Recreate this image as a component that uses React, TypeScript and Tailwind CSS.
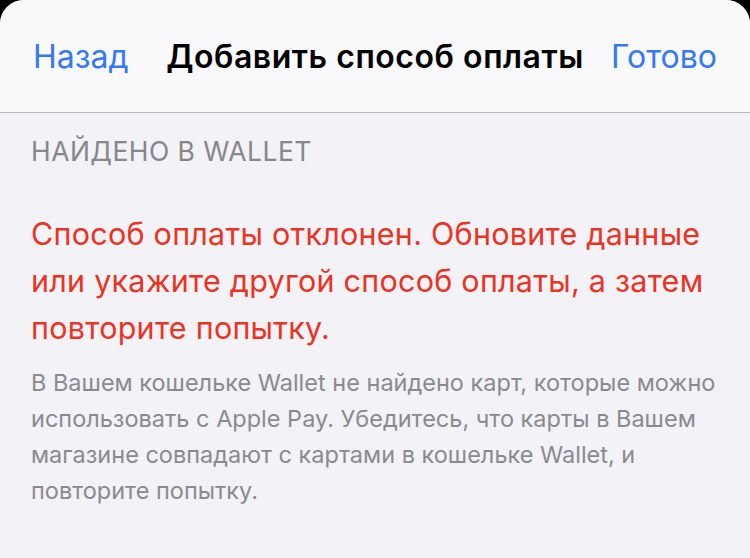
export default function App() {
  const font = { fontFamily: 'Inter, "Noto Sans", sans-serif' }

  return (
    <div className="w-[750px] h-[558px] bg-black overflow-hidden" style={font}>
      <div className="h-full rounded-t-[24px] bg-[#f2f2f7] overflow-hidden">
        <header className="h-[113px] bg-[#f9f9fb] border-b border-[#b7b7bb] grid grid-cols-[1fr_auto_1fr] items-center px-[33px] pt-[2px]">
          <button className="justify-self-start text-[32px] text-[#3478f6]">Назад</button>
          <h1 className="text-[32px] font-semibold text-black tracking-[0.55px]">Добавить способ оплаты</h1>
          <button className="justify-self-end text-[32px] text-[#3478f6]">Готово</button>
        </header>

        <div className="px-[31px]">
          <div className="pt-[22px] text-[26.5px] leading-[32px] text-[#86868b] uppercase tracking-[0.45px]">
            Найдено в Wallet
          </div>

          <div className="mt-[43px] text-[30.5px] leading-[47px] text-[#eb3324] tracking-[0.25px]">
            <div className="whitespace-nowrap">Способ оплаты отклонен. Обновите данные</div>
            <div className="whitespace-nowrap">или укажите другой способ оплаты, а затем</div>
            <div className="whitespace-nowrap">повторите попытку.</div>
          </div>

          <div className="mt-[14px] text-[23.5px] leading-[36px] text-[#8a8a8e]">
            <div className="whitespace-nowrap">В Вашем кошельке Wallet не найдено карт, которые можно</div>
            <div className="whitespace-nowrap">использовать с Apple Pay. Убедитесь, что карты в Вашем</div>
            <div className="whitespace-nowrap">магазине совпадают с картами в кошельке Wallet, и</div>
            <div className="whitespace-nowrap">повторите попытку.</div>
          </div>
        </div>
      </div>
    </div>
  )
}
